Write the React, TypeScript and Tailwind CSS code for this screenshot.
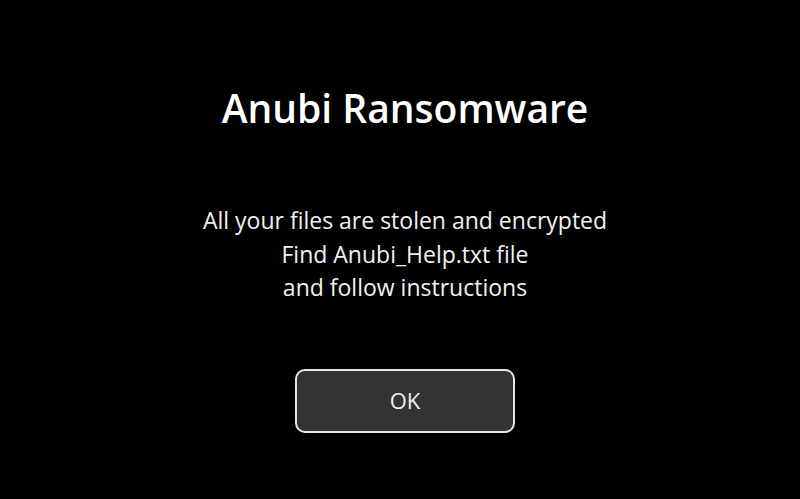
export default function App() {
  return (
    <div
      className="w-[800px] h-[499px] bg-black flex flex-col items-center pl-[10px] text-white"
      style={{ fontFamily: '"Open Sans", "Noto Sans", sans-serif' }}>
      <h1 className="mt-[82px] text-[39px] leading-[52px] font-semibold">Anubi Ransomware</h1>
      <div className="mt-[70px] flex flex-col items-center text-[23px] leading-[33.5px] text-[#f2f2f2]">
        <p>All your files are stolen and encrypted</p>
        <p>Find Anubi_Help.txt file</p>
        <p>and follow instructions</p>
      </div>
      <button className="mt-[64px] w-[220px] h-[64px] rounded-[10px] border-2 border-[#e6e6e6] bg-[#333333] text-[22px] text-[#f0f0f0]">
        OK
      </button>
    </div>
  );
}
